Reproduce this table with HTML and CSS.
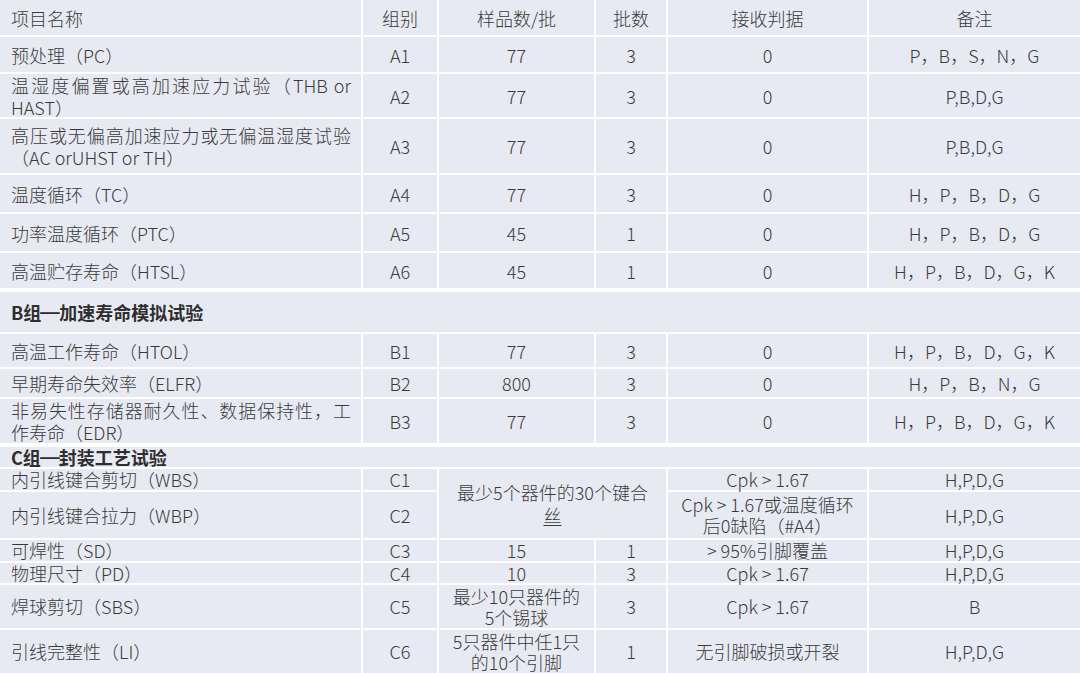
FILE: index.html
```html
<!DOCTYPE html>
<html lang="zh-CN">
<head>
<meta charset="utf-8">
<title>试验项目表</title>
<link rel="stylesheet" href="styles.css">
</head>
<body>
<div class="table">
  <div class="cell name">项目名称</div>
  <div class="cell">组别</div>
  <div class="cell">样品数/批</div>
  <div class="cell">批数</div>
  <div class="cell">接收判据</div>
  <div class="cell">备注</div>

  <div class="cell name">预处理（PC）</div>
  <div class="cell">A1</div>
  <div class="cell">77</div>
  <div class="cell">3</div>
  <div class="cell">0</div>
  <div class="cell">P，B，S，N，G</div>

  <div class="cell name">温湿度偏置或高加速应力试验（THB or HAST）</div>
  <div class="cell">A2</div>
  <div class="cell">77</div>
  <div class="cell">3</div>
  <div class="cell">0</div>
  <div class="cell">P,B,D,G</div>

  <div class="cell name">高压或无偏高加速应力或无偏温湿度试验（AC orUHST or TH）</div>
  <div class="cell">A3</div>
  <div class="cell">77</div>
  <div class="cell">3</div>
  <div class="cell">0</div>
  <div class="cell">P,B,D,G</div>

  <div class="cell name">温度循环（TC）</div>
  <div class="cell">A4</div>
  <div class="cell">77</div>
  <div class="cell">3</div>
  <div class="cell">0</div>
  <div class="cell">H，P，B，D，G</div>

  <div class="cell name">功率温度循环（PTC）</div>
  <div class="cell">A5</div>
  <div class="cell">45</div>
  <div class="cell">1</div>
  <div class="cell">0</div>
  <div class="cell">H，P，B，D，G</div>

  <div class="cell name">高温贮存寿命（HTSL）</div>
  <div class="cell">A6</div>
  <div class="cell">45</div>
  <div class="cell">1</div>
  <div class="cell">0</div>
  <div class="cell">H，P，B，D，G，K</div>

  <div class="cell title">B组<span class="dash">—</span>加速寿命模拟试验</div>

  <div class="cell name">高温工作寿命（HTOL）</div>
  <div class="cell">B1</div>
  <div class="cell">77</div>
  <div class="cell">3</div>
  <div class="cell">0</div>
  <div class="cell">H，P，B，D，G，K</div>

  <div class="cell name">早期寿命失效率（ELFR）</div>
  <div class="cell">B2</div>
  <div class="cell">800</div>
  <div class="cell">3</div>
  <div class="cell">0</div>
  <div class="cell">H，P，B，N，G</div>

  <div class="cell name">非易失性存储器耐久性、数据保持性，工作寿命（EDR）</div>
  <div class="cell">B3</div>
  <div class="cell">77</div>
  <div class="cell">3</div>
  <div class="cell">0</div>
  <div class="cell">H，P，B，D，G，K</div>

  <div class="cell title">C组<span class="dash">—</span>封装工艺试验</div>

  <div class="cell name tight">内引线键合剪切（WBS）</div>
  <div class="cell tight">C1</div>
  <div class="cell tight merged">最少5个器件的30个键合<br><span class="spell">丝</span></div>
  <div class="cell tight">Cpk &gt; 1.67</div>
  <div class="cell tight">H,P,D,G</div>

  <div class="cell name tight">内引线键合拉力（WBP）</div>
  <div class="cell tight">C2</div>
  <div class="cell tight">Cpk &gt; 1.67或温度循环<br>后0缺陷（#A4）</div>
  <div class="cell tight">H,P,D,G</div>

  <div class="cell name tight">可焊性（SD）</div>
  <div class="cell tight">C3</div>
  <div class="cell tight">15</div>
  <div class="cell tight">1</div>
  <div class="cell tight">&gt; 95%引脚覆盖</div>
  <div class="cell tight">H,P,D,G</div>

  <div class="cell name tight">物理尺寸（PD）</div>
  <div class="cell tight">C4</div>
  <div class="cell tight">10</div>
  <div class="cell tight">3</div>
  <div class="cell tight">Cpk &gt; 1.67</div>
  <div class="cell tight">H,P,D,G</div>

  <div class="cell name tight">焊球剪切（SBS）</div>
  <div class="cell tight">C5</div>
  <div class="cell tight">最少10只器件的<br>5个锡球</div>
  <div class="cell tight">3</div>
  <div class="cell tight">Cpk &gt; 1.67</div>
  <div class="cell tight">B</div>

  <div class="cell name tight">引线完整性（LI）</div>
  <div class="cell tight">C6</div>
  <div class="cell tight">5只器件中任1只<br>的10个引脚</div>
  <div class="cell tight">1</div>
  <div class="cell tight">无引脚破损或开裂</div>
  <div class="cell tight">H,P,D,G</div>
</div>
</body>
</html>
```

FILE: styles.css
```css
html, body {
  margin: 0;
  padding: 0;
  background: #ffffff;
}

body {
  width: 1080px;
  height: 673px;
  overflow: hidden;
  font-family: "Noto Sans CJK SC", "Noto Sans", sans-serif;
  font-size: 18px;
  font-weight: 300;
  color: #3a3a3a;
}

.table {
  display: grid;
  width: 1080px;
  height: 673px;
  grid-template-columns: 361px 74px 155px 70px 199px 211px;
  grid-template-rows:
    35px 35px 43px 54px 37px 37px 35px
    42px 33px 28px 44px
    22px 21px 46px 21px 20px 43px 43px;
  gap: 2px;
  background: #ffffff;
}

.cell {
  display: grid;
  align-content: center;
  text-align: center;
  background: #e8eaf3;
  line-height: 22px;
  padding: 0 6px;
  min-width: 0;
}

.cell.name {
  text-align: justify;
  padding: 0 10px 0 11px;
}

.cell.tight {
  line-height: 21px;
}

.cell.title {
  display: block;
  grid-column: 1 / -1;
  margin-top: 2px;
  text-align: left;
  font-weight: 700;
  color: #2e2e2e;
  padding: 0 11px;
  display: flex;
  align-items: center;
  line-height: 20px;
}

.dash {
  font-family: "Liberation Sans", sans-serif;
  font-weight: 700;
  display: inline-block;
  width: 18px;
  text-align: center;
  transform: scaleX(1.1);
}

.cell.merged {
  grid-column: span 2;
  grid-row: span 2;
  line-height: 23px;
}

.spell {
  text-decoration: underline;
  text-underline-offset: 2px;
}
```
